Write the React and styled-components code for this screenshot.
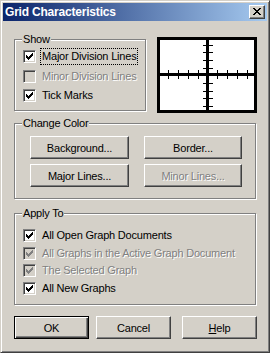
import React from 'react';
import styled, { createGlobalStyle, css } from 'styled-components';

const Global = createGlobalStyle`
  html, body { margin:0; padding:0; background:#d4d0c8; }
  body { font-family:'Liberation Sans', Arial, sans-serif; font-size:11px; letter-spacing:-0.2px; }
`;

const Window = styled.div`
  width:270px;
  height:353px;
  box-sizing:border-box;
  background:#d4d0c8;
  border:1px solid;
  border-color:#d4d0c8 #404040 #404040 #d4d0c8;
  box-shadow:inset 1px 1px #fff, inset -1px -1px #808080;
  padding:2px;
  display:flex;
  flex-direction:column;
`;

const TitleBar = styled.div`
  height:18px;
  display:flex;
  align-items:center;
  padding-left:2px;
  background:linear-gradient(to right, #0a246a, #a6caf0);
  color:#fff;
  font-weight:bold;
  font-size:12px;
  letter-spacing:-0.2px;
`;

const Title = styled.span`
  flex:1;
`;

const CloseBtn = styled.div`
  width:16px;
  height:14px;
  box-sizing:border-box;
  margin-right:2px;
  background:#d4d0c8;
  border:1px solid;
  border-color:#fff #404040 #404040 #fff;
  box-shadow:inset -1px -1px #808080;
  display:flex;
  padding:2px 0 0 3px;
`;

const Body = styled.div`
  display:flex;
  flex-direction:column;
  padding:16px 10px 0 11px;
`;

const Row = styled.div`
  display:flex;
  align-items:flex-start;
`;

const Group = styled.div`
  position:relative;
  box-sizing:border-box;
  width:${p => p.w}px;
  height:${p => p.h}px;
  margin-top:${p => p.mt || 0}px;
  border:1px solid #808080;
  box-shadow:1px 1px 0 #fff, inset 1px 1px 0 #fff;
  padding:${p => p.pad};
`;

const Legend = styled.span`
  position:absolute;
  top:-7px;
  left:7px;
  line-height:13px;
  padding:0 1px;
  background:#d4d0c8;
  color:#000;
`;

const Preview = styled.div`
  margin-left:auto;
  width:100px;
  height:76px;
  box-sizing:border-box;
  border:3px solid #000;
  background:#fff;
  svg { display:block; }
`;

const CheckList = styled.div`
  display:flex;
  flex-direction:column;
  gap:${p => p.gap}px;
`;

const CheckRow = styled.div`
  display:flex;
  align-items:center;
  height:13px;
`;

const Box = styled.span`
  width:13px;
  height:13px;
  box-sizing:border-box;
  flex:none;
  border:1px solid;
  border-color:#808080 #fff #fff #808080;
  box-shadow:inset 1px 1px #404040, inset -1px -1px #d4d0c8;
  background:${p => (p.disabled ? '#d4d0c8' : '#fff')};
  display:flex;
  padding:2px 0 0 2px;
`;

const disabledText = css`
  color:#808080;
  text-shadow:1px 1px 0 #fff;
`;

const Label = styled.span`
  margin-left:4px;
  padding:0 1px;
  line-height:15px;
  white-space:nowrap;
  color:#000;
  border:1px solid transparent;
  ${p => p.disabled && disabledText}
  ${p => p.focus && css`border:1px dotted #000;`}
`;

const ButtonGrid = styled.div`
  display:grid;
  grid-template-columns:98px 98px;
  column-gap:16px;
  row-gap:5px;
`;

const Button = styled.button`
  width:${p => p.w || 98}px;
  height:23px;
  box-sizing:border-box;
  padding:0;
  font-family:'Liberation Sans', Arial, sans-serif;
  font-size:11px;
  letter-spacing:-0.2px;
  color:#000;
  background:#d4d0c8;
  border:1px solid;
  border-color:#fff #404040 #404040 #fff;
  box-shadow:inset -1px -1px #808080;
  ${p => p.disabled && disabledText}
  ${p => p.primary && css`
    border:1px solid #000;
    box-shadow:inset 1px 1px #fff, inset -1px -1px #404040, inset -2px -2px #808080;
  `}
  u { text-decoration:underline; }
`;

const ButtonRow = styled.div`
  display:flex;
  gap:7px;
  margin-top:11px;
  button:last-child { margin-left:auto; }
`;

const Check = ({ color }) => {
  const cols = [2, 3, 4, 3, 2, 1, 0];
  return (
    <svg width="7" height="7" viewBox="0 0 7 7" shapeRendering="crispEdges">
      {cols.map((y, x) => (
        <rect key={x} x={x} y={y} width="1" height="3" fill={color} />
      ))}
    </svg>
  );
};

const CloseGlyph = () => {
  const rows = [[0, 1, 6, 7], [1, 2, 5, 6], [2, 3, 4, 5], [3, 4], [2, 3, 4, 5], [1, 2, 5, 6], [0, 1, 6, 7]];
  return (
    <svg width="8" height="7" viewBox="0 0 8 7" shapeRendering="crispEdges">
      {rows.map((xs, y) => xs.map(x => <rect key={`${x}-${y}`} x={x} y={y} width="1" height="1" fill="#000" />))}
    </svg>
  );
};

const CheckItem = ({ checked, disabled, focus, children }) => (
  <CheckRow>
    <Box disabled={disabled}>{checked && <Check color={disabled ? '#808080' : '#000'} />}</Box>
    <Label disabled={disabled} focus={focus}>{children}</Label>
  </CheckRow>
);

const GridPreview = () => {
  const hTicks = [8, 18, 28, 38, 57, 67, 77, 87];
  const vTicks = [5, 12, 20, 28, 43, 51, 58, 66];
  return (
    <svg width="94" height="70" viewBox="0 0 94 70" shapeRendering="crispEdges">
      <rect x="46" y="0" width="3" height="70" fill="#000" />
      <rect x="0" y="33" width="94" height="3" fill="#000" />
      {hTicks.map(x => <rect key={`h${x}`} x={x} y="30" width="1" height="9" fill="#000" />)}
      {vTicks.map(y => <rect key={`v${y}`} x="43" y={y} width="10" height="1" fill="#000" />)}
    </svg>
  );
};

export default function App() {
  return (
    <>
      <Global />
      <Window>
        <TitleBar>
          <Title>Grid Characteristics</Title>
          <CloseBtn><CloseGlyph /></CloseBtn>
        </TitleBar>
        <Body>
          <Row>
            <Group w={132} h={72} mt={2} pad="10px 0 0 8px">
              <Legend>Show</Legend>
              <CheckList gap={6.5}>
                <CheckItem checked focus>Major Division Lines</CheckItem>
                <CheckItem disabled>Minor Division Lines</CheckItem>
                <CheckItem checked>Tick Marks</CheckItem>
              </CheckList>
            </Group>
            <Preview><GridPreview /></Preview>
          </Row>
          <Group w={242} h={76} mt={10} pad="12px 0 0 15px">
            <Legend>Change Color</Legend>
            <ButtonGrid>
              <Button w={99}>Background...</Button>
              <Button>Border...</Button>
              <Button w={99}>Major Lines...</Button>
              <Button disabled>Minor Lines...</Button>
            </ButtonGrid>
          </Group>
          <Group w={242} h={92} mt={14} pad="15px 0 0 8px">
            <Legend>Apply To</Legend>
            <CheckList gap={4.7}>
              <CheckItem checked>All Open Graph Documents</CheckItem>
              <CheckItem checked disabled>All Graphs in the Active Graph Document</CheckItem>
              <CheckItem checked disabled>The Selected Graph</CheckItem>
              <CheckItem checked>All New Graphs</CheckItem>
            </CheckList>
          </Group>
          <ButtonRow>
            <Button primary w={75}>OK</Button>
            <Button w={75}>Cancel</Button>
            <Button w={75}><u>H</u>elp</Button>
          </ButtonRow>
        </Body>
      </Window>
    </>
  );
}
